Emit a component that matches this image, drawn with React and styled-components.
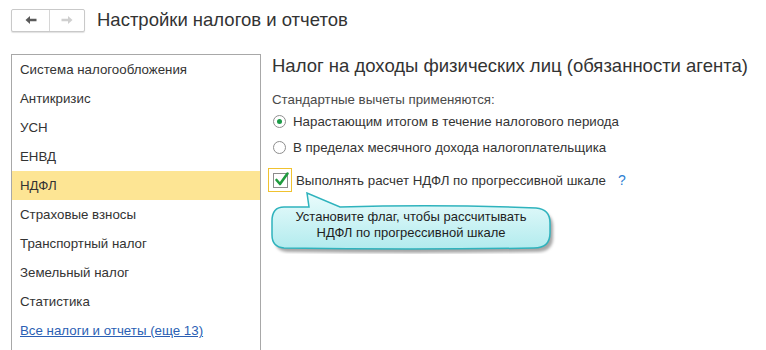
import React from "react";
import styled, { createGlobalStyle } from "styled-components";

const GlobalStyle = createGlobalStyle`
  body {
    margin: 0;
    background: #fff;
    font-family: "Liberation Sans", Arial, sans-serif;
    overflow: hidden;
  }
`;

const Page = styled.div`
  width: 766px;
  height: 350px;
  display: flex;
  flex-direction: column;
  overflow: hidden;
`;

const Header = styled.header`
  height: 40px;
  display: flex;
  align-items: center;
  padding-left: 11px;
  gap: 12px;
`;

const NavGroup = styled.div`
  display: flex;
  height: 23px;
  box-sizing: border-box;
  border: 1px solid #c9c9c9;
  border-radius: 2px;
  box-shadow: 0 1px 1px rgba(0, 0, 0, 0.12);
  background: #fff;
`;

const NavButton = styled.div`
  width: ${(p) => p.w}px;
  display: flex;
  align-items: center;
  justify-content: center;
  border-right: ${(p) => (p.divider ? "1px solid #d6d6d6" : "none")};
`;

const Title = styled.h1`
  margin: 0;
  font-size: 18.5px;
  font-weight: normal;
  color: #333;
`;

const Body = styled.div`
  flex: 1;
  display: flex;
  margin-top: 14px;
`;

const Sidebar = styled.ul`
  list-style: none;
  margin: 0 0 0 11px;
  padding: 0;
  width: 250px;
  box-sizing: border-box;
  border: 1px solid #a8a8a8;
  border-bottom: none;
`;

const SideItem = styled.li`
  height: 29px;
  line-height: 29px;
  padding-left: 8px;
  font-size: 13.3px;
  color: #333;
  background: ${(p) => (p.active ? "#fde594" : "transparent")};
`;

const SideLink = styled.a`
  color: #2b5fb4;
  text-decoration: underline;
`;

const Content = styled.section`
  position: relative;
  flex: 1;
  padding-left: 11px;
`;

const Heading = styled.h2`
  margin: 0;
  font-size: 18.5px;
  line-height: 24px;
  font-weight: normal;
  color: #333;
`;

const GroupLabel = styled.div`
  margin-top: 14px;
  font-size: 13.3px;
  line-height: 16px;
  color: #4a4a4a;
`;

const OptionRow = styled.label`
  height: 26px;
  display: flex;
  align-items: center;
  gap: 7px;
  font-size: 13.3px;
  color: #333;
`;

const Radio = styled.span`
  width: 13px;
  height: 13px;
  margin-left: 1px;
  box-sizing: border-box;
  border: 1px solid #8e8e8e;
  border-radius: 50%;
  background: #fff;
  display: flex;
  align-items: center;
  justify-content: center;

  &::after {
    content: "";
    width: 5px;
    height: 5px;
    border-radius: 50%;
    background: ${(p) => (p.checked ? "#1b9a47" : "transparent")};
  }
`;

const CheckRow = styled.label`
  margin-top: 8px;
  margin-left: -4px;
  display: flex;
  align-items: center;
  gap: 4px;
  font-size: 13.3px;
  color: #333;
`;

const CheckFrame = styled.span`
  width: 24px;
  height: 24px;
  box-sizing: border-box;
  border: 1px solid #f0c230;
  display: flex;
  align-items: center;
  justify-content: center;
`;

const CheckBox = styled.span`
  position: relative;
  width: 15px;
  height: 15px;
  box-sizing: border-box;
  border: 1px solid #8c8c8c;
  background: #fff;

  svg {
    position: absolute;
    left: 0;
    top: -3px;
  }
`;

const Help = styled.span`
  margin-left: 8px;
  color: #2f7fd2;
  font-size: 14px;
`;

const Callout = styled.div`
  position: absolute;
  left: 9px;
  top: 138px;
  width: 290px;
  height: 62px;

  svg {
    position: absolute;
    left: 0;
    top: 0;
  }
`;

const CalloutText = styled.div`
  position: relative;
  width: 282px;
  padding-top: 17px;
  text-align: center;
  font-size: 13px;
  line-height: 16px;
  color: #1e1e1e;
`;

const Arrow = ({ color, flip }) => (
  <svg width="12" height="10" viewBox="0 0 12 10" style={{ transform: flip ? "scaleX(-1)" : "none" }}>
    <path d="M0.5 5 L5 1 L5 3.8 L11.5 3.8 L11.5 6.2 L5 6.2 L5 9 Z" fill={color} />
  </svg>
);

const bubblePath =
  "M14 15 L39 15 L37 1 L70 15 Q170 12 266 16 Q280 17 280 31 L280 41 Q280 56 264 56 Q140 58 14 56 Q2 55 2 43 L2 29 Q2 15 14 15 Z";

const items = [
  "Система налогообложения",
  "Антикризис",
  "УСН",
  "ЕНВД",
  "НДФЛ",
  "Страховые взносы",
  "Транспортный налог",
  "Земельный налог",
  "Статистика",
];

export default function App() {
  return (
    <Page>
      <GlobalStyle />
      <Header>
        <NavGroup>
          <NavButton w={37} divider>
            <Arrow color="#5a5a5a" />
          </NavButton>
          <NavButton w={34}>
            <Arrow color="#cfcfcf" flip />
          </NavButton>
        </NavGroup>
        <Title>Настройки налогов и отчетов</Title>
      </Header>
      <Body>
        <Sidebar>
          {items.map((item) => (
            <SideItem key={item} active={item === "НДФЛ"}>
              {item}
            </SideItem>
          ))}
          <SideItem>
            <SideLink>Все налоги и отчеты (еще 13)</SideLink>
          </SideItem>
        </Sidebar>
        <Content>
          <Heading>Налог на доходы физических лиц (обязанности агента)</Heading>
          <GroupLabel>Стандартные вычеты применяются:</GroupLabel>
          <OptionRow>
            <Radio checked />
            Нарастающим итогом в течение налогового периода
          </OptionRow>
          <OptionRow>
            <Radio />
            В пределах месячного дохода налогоплательщика
          </OptionRow>
          <CheckRow>
            <CheckFrame>
              <CheckBox>
                <svg width="16" height="16" viewBox="0 0 16 16">
                  <path d="M2.5 9 L6 13 L13.5 2.5" fill="none" stroke="#1f9b3e" strokeWidth="2.6" strokeLinecap="round" strokeLinejoin="round" />
                </svg>
              </CheckBox>
            </CheckFrame>
            Выполнять расчет НДФЛ по прогрессивной шкале
            <Help>?</Help>
          </CheckRow>
          <Callout>
            <svg width="290" height="62" viewBox="0 0 290 62">
              <defs>
                <linearGradient id="bubbleFill" x1="0" y1="0" x2="0" y2="1">
                  <stop offset="0" stopColor="#eafcfc" />
                  <stop offset="1" stopColor="#b2ebee" />
                </linearGradient>
                <filter id="bubbleShadow" x="-10%" y="-20%" width="120%" height="160%">
                  <feGaussianBlur stdDeviation="1.6" />
                </filter>
              </defs>
              <path d={bubblePath} transform="translate(3 4)" fill="rgba(0,0,0,0.35)" filter="url(#bubbleShadow)" />
              <path d={bubblePath} fill="url(#bubbleFill)" stroke="#2fb3bd" strokeWidth="1.5" />
            </svg>
            <CalloutText>
              Установите флаг, чтобы рассчитывать
              <br />
              НДФЛ по прогрессивной шкале
            </CalloutText>
          </Callout>
        </Content>
      </Body>
    </Page>
  );
}
